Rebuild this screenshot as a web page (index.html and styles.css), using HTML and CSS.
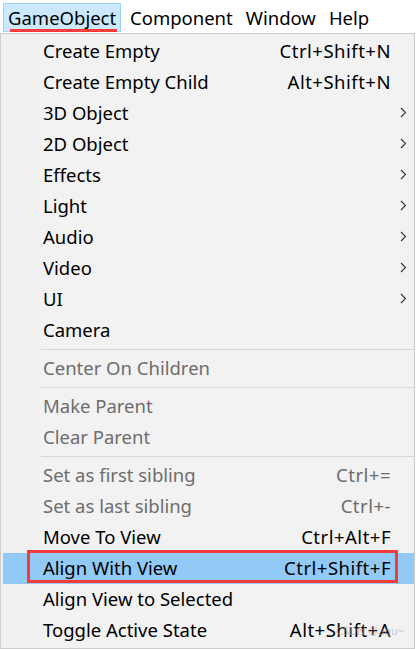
FILE: index.html
```html
<!DOCTYPE html>
<html>
<head>
<meta charset="utf-8">
<link rel="stylesheet" href="styles.css">
</head>
<body>
<div class="menubar">
  <div class="mb-item active">GameObject<span class="underline"></span></div>
  <div class="mb-item">Component</div>
  <div class="mb-item">Window</div>
  <div class="mb-item">Help</div>
</div>
<div class="dropdown">
  <div class="item"><span class="label">Create Empty</span><span class="sc">Ctrl+Shift+N</span><span class="arr"></span></div>
  <div class="item"><span class="label">Create Empty Child</span><span class="sc">Alt+Shift+N</span><span class="arr"></span></div>
  <div class="item"><span class="label">3D Object</span><span class="sc"></span><span class="arr"><svg width="7" height="11" viewBox="0 0 7 11"><path d="M1 1l4.5 4.5L1 10" fill="none" stroke="#333" stroke-width="1.1"/></svg></span></div>
  <div class="item"><span class="label">2D Object</span><span class="sc"></span><span class="arr"><svg width="7" height="11" viewBox="0 0 7 11"><path d="M1 1l4.5 4.5L1 10" fill="none" stroke="#333" stroke-width="1.1"/></svg></span></div>
  <div class="item"><span class="label">Effects</span><span class="sc"></span><span class="arr"><svg width="7" height="11" viewBox="0 0 7 11"><path d="M1 1l4.5 4.5L1 10" fill="none" stroke="#333" stroke-width="1.1"/></svg></span></div>
  <div class="item"><span class="label">Light</span><span class="sc"></span><span class="arr"><svg width="7" height="11" viewBox="0 0 7 11"><path d="M1 1l4.5 4.5L1 10" fill="none" stroke="#333" stroke-width="1.1"/></svg></span></div>
  <div class="item"><span class="label">Audio</span><span class="sc"></span><span class="arr"><svg width="7" height="11" viewBox="0 0 7 11"><path d="M1 1l4.5 4.5L1 10" fill="none" stroke="#333" stroke-width="1.1"/></svg></span></div>
  <div class="item"><span class="label">Video</span><span class="sc"></span><span class="arr"><svg width="7" height="11" viewBox="0 0 7 11"><path d="M1 1l4.5 4.5L1 10" fill="none" stroke="#333" stroke-width="1.1"/></svg></span></div>
  <div class="item"><span class="label">UI</span><span class="sc"></span><span class="arr"><svg width="7" height="11" viewBox="0 0 7 11"><path d="M1 1l4.5 4.5L1 10" fill="none" stroke="#333" stroke-width="1.1"/></svg></span></div>
  <div class="item"><span class="label">Camera</span><span class="sc"></span><span class="arr"></span></div>
  <div class="sep"></div>
  <div class="item disabled"><span class="label">Center On Children</span><span class="sc"></span><span class="arr"></span></div>
  <div class="sep"></div>
  <div class="item disabled"><span class="label">Make Parent</span><span class="sc"></span><span class="arr"></span></div>
  <div class="item disabled"><span class="label">Clear Parent</span><span class="sc"></span><span class="arr"></span></div>
  <div class="sep"></div>
  <div class="item disabled"><span class="label">Set as first sibling</span><span class="sc">Ctrl+=</span><span class="arr"></span></div>
  <div class="item disabled"><span class="label">Set as last sibling</span><span class="sc">Ctrl+-</span><span class="arr"></span></div>
  <div class="item"><span class="label">Move To View</span><span class="sc">Ctrl+Alt+F</span><span class="arr"></span></div>
  <div class="item hl"><span class="label">Align With View</span><span class="sc">Ctrl+Shift+F</span><span class="arr"></span><span class="redbox"></span></div>
  <div class="item"><span class="label">Align View to Selected</span><span class="sc"></span><span class="arr"></span></div>
  <div class="item"><span class="label">Toggle Active State</span><span class="sc">Alt+Shift+A</span><span class="arr"></span><span class="wm">CSDN @aqu~</span></div>
</div>
</body>
</html>
```
FILE: styles.css
```css
html, body {
  margin: 0;
  padding: 0;
  background: #ffffff;
  width: 416px;
  height: 649px;
  overflow: hidden;
}
body {
  font-family: "Noto Sans", "Open Sans", sans-serif;
  font-size: 18.5px;
  color: #000;
}
.menubar {
  height: 33px;
  display: flex;
  align-items: flex-start;
  padding: 3px 0 0 3px;
  box-sizing: border-box;
  background: #fff;
}
.mb-item {
  position: relative;
  height: 29px;
  line-height: 28px;
  padding: 0 3px 0 3px;
  box-sizing: border-box;
  border: 1px solid transparent;
  font-size: 18.5px;
  margin-right: 5px;
}
.mb-item.active {
  background: #cce8ff;
  border-color: #99d1ff;
  width: 118px;
  padding-left: 4px;
}
.underline {
  position: absolute;
  left: 6px;
  top: 25px;
  width: 107px;
  height: 3px;
  background: #ff3b3b;
}
.dropdown {
  width: 415px;
  box-sizing: border-box;
  border: 1px solid #cccccc;
  background: linear-gradient(to right, #f0f0f0 0, #f0f0f0 39px, #f2f2f2 39px);
  padding: 2px 0 2px 2px;
}
.item {
  position: relative;
  height: 31px;
  box-sizing: border-box;
  display: grid;
  grid-template-columns: 1fr auto 23px;
  align-items: center;
  padding: 0 0 2px 40px;
  line-height: 29px;
}
.item.disabled {
  color: #6d6d6d;
}
.item.hl {
  background: #91c9f7;
}
.sc {
  text-align: right;
  letter-spacing: 0.5px;
}
.arr {
  display: flex;
  align-items: center;
  justify-content: center;
  height: 29px;
  padding-left: 2px;
}
.sep {
  height: 1px;
  background: #d7d7d7;
  margin: 3px 0 3px 38px;
}
.redbox {
  position: absolute;
  left: 24px;
  top: -3px;
  width: 371px;
  height: 33px;
  box-sizing: border-box;
  border: 3px solid #f23a3a;
}
.wm {
  position: absolute;
  left: 333px;
  top: 9px;
  font-size: 11px;
  line-height: 14px;
  letter-spacing: 0;
  color: rgba(170, 170, 170, 0.6);
  font-family: "Noto Sans", sans-serif;
}
```
